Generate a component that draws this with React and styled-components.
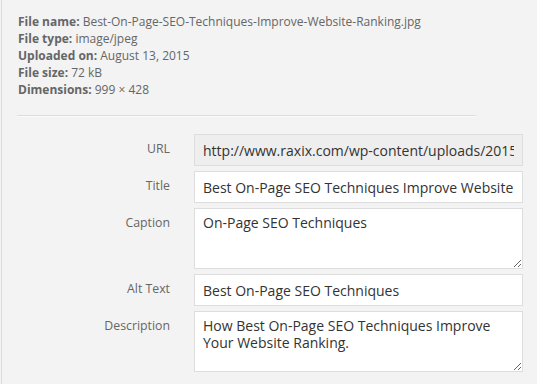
import React from "react";
import styled, { createGlobalStyle } from "styled-components";

const Global = createGlobalStyle`
  html, body { margin: 0; padding: 0; background: #f3f3f3; }
  body { font-family: "Open Sans", "Noto Sans", sans-serif; }
`;

const Panel = styled.div`
  width: 536px;
  height: 384px;
  margin-left: 1px;
  border-left: 1px solid #dcdcdc;
  box-sizing: border-box;
  background: #f3f3f3;
  padding-top: 13px;
  overflow: hidden;
`;

const Meta = styled.div`
  padding-left: 16px;
  font-size: 12px;
  line-height: 17px;
  color: #666;
`;

const MetaLine = styled.div`
  white-space: nowrap;
  strong { font-weight: 700; }
`;

const Separator = styled.hr`
  margin: 17px 61px 17px 15px;
  border: 0;
  border-top: 1px solid #dddddd;
  border-bottom: 1px solid #fafafa;
  height: 0;
`;

const Form = styled.div`
  display: grid;
  grid-template-columns: 168px 329px;
  column-gap: 24px;
  row-gap: 5px;
`;

const Label = styled.label`
  text-align: right;
  font-size: 12.3px;
  line-height: 17px;
  padding-top: 6px;
  color: #666;
`;

const Input = styled.input`
  box-sizing: border-box;
  width: 100%;
  height: 32px;
  margin: 0;
  padding: 0 8px;
  border: 1px solid #dddddd;
  background: ${(p) => (p.readOnly ? "#eeeeee" : "#ffffff")};
  font-family: "Open Sans", "Noto Sans", sans-serif;
  font-size: 14px;
  color: #333;
  outline: none;
`;

const TextArea = styled.textarea`
  box-sizing: border-box;
  width: 100%;
  height: 61px;
  margin: 0;
  padding: 5px 8px;
  border: 1px solid #dddddd;
  background: #fff;
  font-family: "Open Sans", "Noto Sans", sans-serif;
  font-size: 14px;
  line-height: 17px;
  color: #333;
  outline: none;
  display: block;
  resize: vertical;
`;

export default function App() {
  return (
    <>
      <Global />
      <Panel>
        <Meta>
          <MetaLine><strong>File name:</strong> Best-On-Page-SEO-Techniques-Improve-Website-Ranking.jpg</MetaLine>
          <MetaLine><strong>File type:</strong> image/jpeg</MetaLine>
          <MetaLine><strong>Uploaded on:</strong> August 13, 2015</MetaLine>
          <MetaLine><strong>File size:</strong> 72 kB</MetaLine>
          <MetaLine><strong>Dimensions:</strong> 999 × 428</MetaLine>
        </Meta>
        <Separator />
        <Form>
          <Label>URL</Label>
          <Input readOnly defaultValue="http://www.raxix.com/wp-content/uploads/2015/08/Best-On-Page-SEO-Techniques-Improve-Website-Ranking.jpg" />
          <Label>Title</Label>
          <Input defaultValue="Best On-Page SEO Techniques Improve Website Ranking" />
          <Label>Caption</Label>
          <TextArea defaultValue="On-Page SEO Techniques" />
          <Label>Alt Text</Label>
          <Input defaultValue="Best On-Page SEO Techniques" />
          <Label>Description</Label>
          <TextArea defaultValue="How Best On-Page SEO Techniques Improve Your Website Ranking." />
        </Form>
      </Panel>
    </>
  );
}
